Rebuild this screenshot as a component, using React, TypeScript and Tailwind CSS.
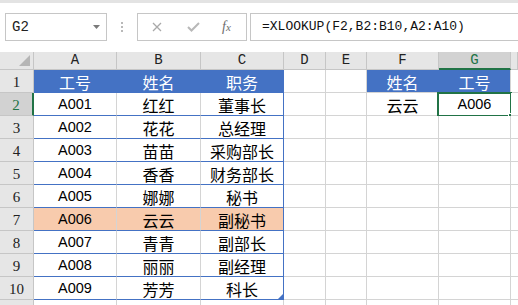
import React from "react";

const COL_LETTERS = ["A", "B", "C", "D", "E", "F", "G", ""];

const ROWS: string[][] = [
  ["工号", "姓名", "职务", "", "", "姓名", "工号", ""],
  ["A001", "红红", "董事长", "", "", "云云", "A006", ""],
  ["A002", "花花", "总经理", "", "", "", "", ""],
  ["A003", "苗苗", "采购部长", "", "", "", "", ""],
  ["A004", "香香", "财务部长", "", "", "", "", ""],
  ["A005", "娜娜", "秘书", "", "", "", "", ""],
  ["A006", "云云", "副秘书", "", "", "", "", ""],
  ["A007", "青青", "副部长", "", "", "", "", ""],
  ["A008", "丽丽", "副经理", "", "", "", "", ""],
  ["A009", "芳芳", "科长", "", "", "", "", ""],
  ["", "", "", "", "", "", "", ""],
];

const sheetFont = { fontFamily: '"Liberation Mono", "DejaVu Sans Mono", monospace' };

function cellClass(r: number, c: number) {
  // r is 1-based sheet row, c is 0-based column (0 = A)
  if (r === 1 && c <= 2) return "bg-[#4472c4] text-white border-r border-b border-[#4472c4]";
  if (r === 1 && c === 5) return "bg-[#4472c4] text-white border-r border-b border-r-[#4472c4] border-b-[#d4d4d4]";
  if (r === 1 && c === 6) return "bg-[#4472c4] text-white border-r border-b border-[#d4d4d4]";
  if (r === 7 && c <= 1) return "bg-[#f8cbad] border-r border-b border-r-[#d4d4d4] border-b-[#4472c4]";
  if (r === 7 && c === 2) return "bg-[#f8cbad] border-r border-b border-[#4472c4]";
  if (r >= 2 && r <= 10 && c <= 1) return "bg-white border-r border-b border-r-[#d4d4d4] border-b-[#4472c4]";
  if (r >= 2 && r <= 10 && c === 2) return "bg-white border-r border-b border-[#4472c4]";
  if (c === 7) return "bg-white border-b border-[#d4d4d4]";
  return "bg-white border-r border-b border-[#d4d4d4]";
}

function Cell({ r, c, text }: { r: number; c: number; text: string }) {
  const latin = /^[A-Z0-9]+$/.test(text);
  return (
    <div className={`relative flex items-center justify-center pt-[2px] ${cellClass(r, c)}`}>
      <span
        className={latin ? "text-[14.5px] text-black" : r === 1 ? "text-[16px]" : "text-[16px] text-black"}
        style={{ fontFamily: latin ? '"Liberation Sans", Arial, sans-serif' : '"Noto Sans CJK SC", sans-serif' }}
      >
        {text}
      </span>

      {/* active cell G2 */}
      {r === 2 && c === 6 && (
        <div className="absolute -left-[2px] -top-[1px] w-[75px] h-[25px] border-2 border-[#217346]">
          <div className="absolute -right-[4px] -bottom-[4px] w-[6px] h-[6px] bg-[#217346] border border-white" />
        </div>
      )}

      {/* table resize handle */}
      {r === 10 && c === 2 && (
        <svg className="absolute right-0 bottom-0 w-[5px] h-[5px]" viewBox="0 0 5 5">
          <path d="M5 0 L5 5 L0 5 Z" fill="#4472c4" />
        </svg>
      )}
    </div>
  );
}

function FormulaBar() {
  return (
    <div className="flex items-start h-[49px] pt-[10px] bg-white">
      {/* Name box */}
      <div className="ml-[5px] w-[102px] h-[28px] border border-[#c6c6c6] bg-white flex items-center pl-[6px] pr-[6px]">
        <span className="text-[14px] text-[#222] flex-1" style={sheetFont}>
          G2
        </span>
        <svg className="w-[7px] h-[4px]" viewBox="0 0 7 4">
          <path d="M0 0 H7 L3.5 4 Z" fill="#7a7a7a" />
        </svg>
      </div>

      {/* Separator dots */}
      <div className="w-[30px] h-[28px] flex flex-col items-center justify-center gap-[2px]">
        <div className="w-[2px] h-[2px] bg-[#b9b9b9]" />
        <div className="w-[2px] h-[2px] bg-[#b9b9b9]" />
        <div className="w-[2px] h-[2px] bg-[#b9b9b9]" />
      </div>

      {/* Cancel / enter / fx */}
      <div className="w-[110px] h-[28px] border border-[#c6c6c6] bg-white flex items-center">
        <svg className="ml-[14px] w-[10px] h-[10px]" viewBox="0 0 10 10">
          <path d="M1 1 L9 9 M9 1 L1 9" stroke="#a9a9a9" strokeWidth="1.3" />
        </svg>
        <svg className="ml-[25px] w-[13px] h-[10px]" viewBox="0 0 13 10">
          <path d="M1 5 L4.5 8.5 L12 1" stroke="#b8b8b8" strokeWidth="2" fill="none" />
        </svg>
        <span
          className="ml-[22px] italic text-[14px] text-[#6d6d6d] leading-none"
          style={{ fontFamily: '"Liberation Serif", "Times New Roman", serif' }}
        >
          f<span className="text-[11px]">x</span>
        </span>
      </div>

      {/* Formula input */}
      <div className="ml-[3px] flex-1 h-[28px] border border-r-0 border-[#c6c6c6] bg-white flex items-center pl-[11px]">
        <span className="text-[13px] text-[#111]" style={sheetFont}>
          =XLOOKUP(F2,B2:B10,A2:A10)
        </span>
      </div>
    </div>
  );
}

export default function App() {
  return (
    <div className="w-[518px] h-[305px] overflow-hidden bg-white">
      <div className="h-[3px] bg-[#e3e3e3]" />
      <FormulaBar />

      <div className="grid grid-cols-[34px_83px_84px_83px_42px_41px_72px_72px_1fr] grid-rows-[18px_repeat(11,23px)]">
        {/* corner */}
        <div className="relative bg-[#e6e6e6] border-r border-b border-[#c6c6c6]">
          <svg className="absolute right-[3px] bottom-[3px] w-[11px] h-[11px]" viewBox="0 0 11 11">
            <path d="M11 0 L11 11 L0 11 Z" fill="#b5b5b5" />
          </svg>
        </div>

        {/* column headers */}
        {COL_LETTERS.map((l, i) => (
          <div
            key={`h${i}`}
            className={
              l === "G"
                ? "flex items-center justify-center bg-[#d2d2d2] text-[#217346] border-r border-b-2 border-r-[#c6c6c6] border-b-[#217346] text-[14px]"
                : "flex items-center justify-center bg-[#e6e6e6] text-[#222] border-r border-b border-[#c6c6c6] text-[14px]"
            }
            style={sheetFont}
          >
            {l}
          </div>
        ))}

        {ROWS.map((row, ri) => {
          const r = ri + 1;
          return (
            <React.Fragment key={`r${r}`}>
              <div
                className={
                  r === 2
                    ? "flex items-center justify-center pt-[2px] bg-[#d2d2d2] text-[#217346] border-b border-r-2 border-b-[#c6c6c6] border-r-[#217346] text-[15px]"
                    : "flex items-center justify-center pt-[2px] bg-[#e6e6e6] text-[#222] border-r border-b border-[#c6c6c6] text-[15px]"
                }
                style={{ fontFamily: '"Liberation Serif", "Times New Roman", serif' }}
              >
                {r <= 10 ? r : ""}
              </div>
              {row.map((t, c) => (
                <Cell key={`c${r}-${c}`} r={r} c={c} text={t} />
              ))}
            </React.Fragment>
          );
        })}
      </div>
    </div>
  );
}
